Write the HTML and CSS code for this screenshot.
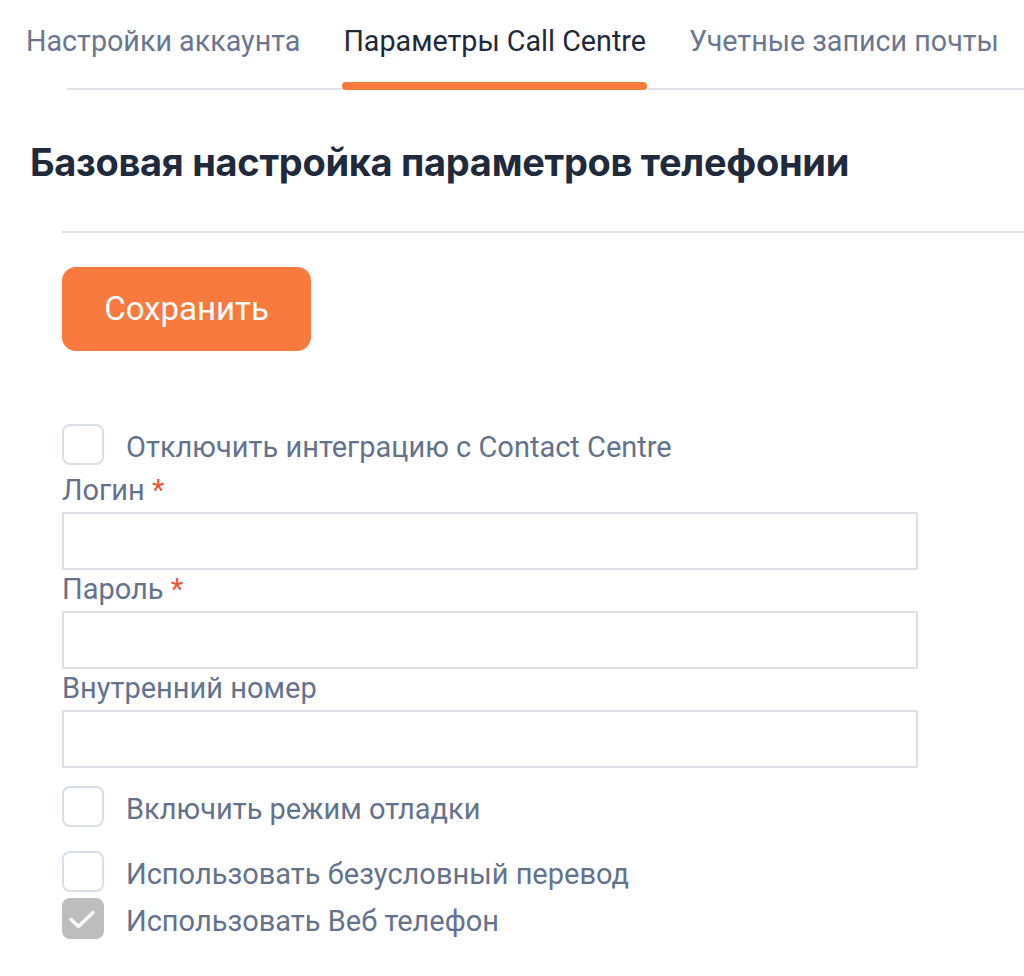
FILE: index.html
```html
<!DOCTYPE html>
<html lang="ru">
<head>
<meta charset="utf-8">
<title>Параметры Call Centre</title>
<link rel="stylesheet" href="styles.css">
</head>
<body>
<div class="page">
  <nav class="tabs">
    <a class="tab">Настройки аккаунта</a>
    <a class="tab active">Параметры Call Centre</a>
    <a class="tab">Учетные записи почты</a>
  </nav>

  <h1 class="title">Базовая настройка параметров телефонии</h1>
  <div class="divider"></div>

  <form class="form">
    <button type="button" class="btn-save">Сохранить</button>

    <label class="check check-first">
      <span class="box"></span>
      <span class="check-text">Отключить интеграцию с Contact Centre</span>
    </label>

    <div class="field field-first">
      <div class="label">Логин <span class="req">*</span></div>
      <div class="input"></div>
    </div>
    <div class="field">
      <div class="label">Пароль <span class="req">*</span></div>
      <div class="input"></div>
    </div>
    <div class="field">
      <div class="label">Внутренний номер</div>
      <div class="input"></div>
    </div>

    <label class="check check-debug">
      <span class="box"></span>
      <span class="check-text">Включить режим отладки</span>
    </label>
    <label class="check check-transfer">
      <span class="box"></span>
      <span class="check-text">Использовать безусловный перевод</span>
    </label>
    <label class="check check-web">
      <span class="box checked">
        <svg viewBox="0 0 37 37" width="37" height="37"><path d="M6 19.5l7.5 7L28 12.5" fill="none" stroke="#f7f7f7" stroke-width="3.6" stroke-linecap="round" stroke-linejoin="round"/></svg>
      </span>
      <span class="check-text">Использовать Веб телефон</span>
    </label>
  </form>
</div>
</body>
</html>
```

FILE: styles.css
```css
* { box-sizing: border-box; }
html, body { margin: 0; padding: 0; background: #fff; }
body { font-family: Roboto, "Noto Sans", sans-serif; color: #64738b; }

.page { width: 1024px; }

.tabs {
  position: relative;
  display: flex;
  gap: 43px;
  padding-left: 26px;
  height: 90px;
  white-space: nowrap;
}
.tabs::before {
  content: "";
  position: absolute;
  left: 67px;
  right: 0;
  bottom: 0;
  height: 2px;
  background: #dfe2e7;
}
.tab {
  position: relative;
  display: block;
  font-size: 28.7px;
  line-height: 34px;
  padding-top: 24px;
  color: #6b7790;
}
.tab.active { color: #1e2a3b; }
.tab.active::after {
  content: "";
  position: absolute;
  left: -1px;
  right: -1px;
  bottom: 0;
  height: 8px;
  border-radius: 4px;
  background: #f97a3e;
  z-index: 1;
}

.title {
  margin: 0;
  padding: 49px 0 0 30px;
  height: 141px;
  font-family: Inter, "Noto Sans", sans-serif;
  font-weight: 700;
  font-size: 38px;
  line-height: 46px;
  color: #1f2a3c;
  letter-spacing: -0.3px;
  white-space: nowrap;
}

.divider {
  margin-left: 62px;
  height: 2px;
  background: #dfe2e7;
}

.form {
  display: flex;
  flex-direction: column;
  align-items: flex-start;
  padding-left: 62px;
  padding-top: 34px;
}

.btn-save {
  width: 249px;
  height: 84px;
  border: none;
  border-radius: 14px;
  background: #f97a3e;
  color: #fff;
  font-family: Roboto, "Noto Sans", sans-serif;
  font-size: 33px;
  padding: 0 0 2px;
  cursor: pointer;
}

.check {
  display: flex;
  align-items: flex-start;
  gap: 22px;
  font-size: 29px;
  color: #64738b;
}
.check-first { margin-top: 73px; }
.check-debug { margin-top: 18px; }
.check-transfer { margin-top: 24px; }
.check-web { margin-top: 6px; }

.box {
  width: 42px;
  height: 41px;
  border: 2px solid #dadee6;
  border-radius: 8px;
  background: #fff;
  display: flex;
  align-items: center;
  justify-content: center;
  flex: none;
}
.box.checked {
  background: #bdbdbd;
  border-color: #bdbdbd;
}
.box svg { display: block; flex: none; }
.check-text { line-height: 35px; margin-top: 6px; }

.field { width: 856px; }
.label {
  font-size: 29px;
  line-height: 34px;
  margin-top: 2px;
  margin-bottom: 5px;
  color: #64738b;
}
.field-first .label { margin-top: 8px; }
.req { color: #f0563a; }
.input {
  height: 58px;
  border: 2px solid #dde1e7;
  background: #fff;
}
```
